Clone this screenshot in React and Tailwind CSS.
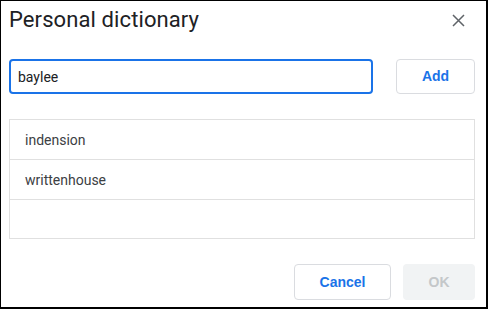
import React, { useState } from "react";

const words = ["indension", "writtenhouse"];

const App = () => {
  const [value, setValue] = useState("baylee");

  return (
    <div
      className="w-[488px] h-[309px] bg-white border-t border-l border-r-2 border-b-2 border-black box-border pl-[8px] pr-[11px]"
      style={{ fontFamily: "Roboto, 'Liberation Sans', sans-serif" }}
    >
      <div className="flex items-start justify-between h-[58px]">
        <h1 className="pt-[5px] text-[22px] leading-[28px] text-[#202124] font-normal tracking-[0.1px]">
          Personal dictionary
        </h1>
        <button className="mt-[13px] mr-[10px] text-[#5f6368]" aria-label="Close">
          <svg width="13" height="13" viewBox="0 0 13 13">
            <path
              d="M1 1 L12 12 M12 1 L1 12"
              stroke="currentColor"
              strokeWidth="1.5"
              fill="none"
            />
          </svg>
        </button>
      </div>

      <div className="flex items-center justify-between">
        <input
          value={value}
          onChange={(e) => setValue(e.target.value)}
          className="w-[364px] h-[35px] border-2 border-[#1a73e8] rounded-[4px] px-[7px] text-[14px] text-[#202124] outline-none"
        />
        <button className="w-[79px] h-[35px] border border-[#dadce0] rounded-[4px] text-[14px] font-bold text-[#1a73e8] font-['Liberation_Sans',Arial,sans-serif]">
          Add
        </button>
      </div>

      <div className="mt-[25px] border border-[#e0e0e0]">
        {words.map((w) => (
          <div
            key={w}
            className="h-[40px] flex items-center pt-[2px] pl-[15px] border-b border-[#e0e0e0] text-[14px] text-[#3c4043]"
          >
            {w}
          </div>
        ))}
        <div className="h-[38px]" />
      </div>

      <div className="mt-[25px] flex justify-end gap-[12px]">
        <button className="w-[97px] h-[36px] border border-[#dadce0] rounded-[4px] text-[14px] font-bold text-[#1a73e8] font-['Liberation_Sans',Arial,sans-serif]">
          Cancel
        </button>
        <button
          disabled
          className="w-[72px] h-[36px] rounded-[4px] bg-[#f1f3f4] text-[14px] font-bold text-[#c4c7c9] font-['Liberation_Sans',Arial,sans-serif]"
        >
          OK
        </button>
      </div>
    </div>
  );
};

export default App;
